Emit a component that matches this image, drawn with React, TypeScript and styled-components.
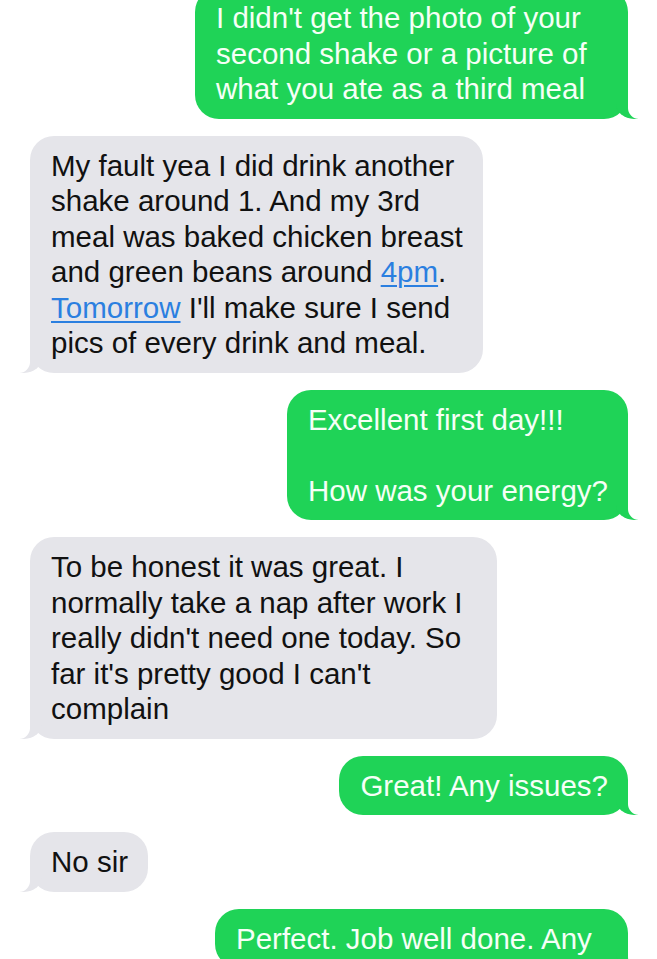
import styled, { createGlobalStyle, css } from "styled-components";

const GlobalStyle = createGlobalStyle`
  html, body {
    margin: 0;
    padding: 0;
    background: #ffffff;
  }
  body {
    width: 657px;
    height: 959px;
    overflow: hidden;
    font-family: "Liberation Sans", Arial, sans-serif;
  }
`;

const GREEN = "#1fd357";
const GRAY = "#e5e5ea";

const Thread = styled.div`
  display: flex;
  flex-direction: column;
  gap: 17px;
  padding: 0 29px 0 30px;
`;

const Bubble = styled.div<{ $mine?: boolean; $minWidth?: number; $first?: boolean }>`
  position: relative;
  box-sizing: border-box;
  padding: 12px 20px 12px 21px;
  border-radius: 24px;
  font-size: 29.5px;
  line-height: 35.5px;
  white-space: nowrap;
  ${(p) => p.$first && "margin-top: -12px;"}
  ${(p) => p.$minWidth && `min-width: ${p.$minWidth}px;`}

  &::before,
  &::after {
    content: "";
    position: absolute;
    bottom: 0;
    height: 25px;
  }

  ${(p) =>
    p.$mine
      ? css`
          align-self: flex-end;
          background: ${GREEN};
          color: #f5fff6;

          &::before {
            right: -10px;
            width: 22px;
            background: ${GREEN};
            border-bottom-left-radius: 18px 15px;
          }
          &::after {
            right: -28px;
            width: 28px;
            background: #ffffff;
            border-bottom-left-radius: 11px;
          }
        `
      : css`
          align-self: flex-start;
          background: ${GRAY};
          color: #111111;

          &::before {
            left: -10px;
            width: 22px;
            background: ${GRAY};
            border-bottom-right-radius: 18px 15px;
          }
          &::after {
            left: -28px;
            width: 28px;
            background: #ffffff;
            border-bottom-right-radius: 11px;
          }
        `}
`;

const Link = styled.span`
  color: #2b7fe0;
  text-decoration: underline;
  text-decoration-thickness: 1.5px;
  text-underline-offset: 3px;
`;

export default function App() {
  return (
    <>
      <GlobalStyle />
      <Thread>
        <Bubble $mine $first $minWidth={433}>
          I didn't get the photo of your
          <br />
          second shake or a picture of
          <br />
          what you ate as a third meal
        </Bubble>

        <Bubble>
          My fault yea I did drink another
          <br />
          shake around 1. And my 3rd
          <br />
          meal was baked chicken breast
          <br />
          and green beans around <Link>4pm</Link>.
          <br />
          <Link>Tomorrow</Link> I'll make sure I send
          <br />
          pics of every drink and meal.
        </Bubble>

        <Bubble $mine>
          Excellent first day!!!
          <br />
          <br />
          How was your energy?
        </Bubble>

        <Bubble $minWidth={467}>
          To be honest it was great. I
          <br />
          normally take a nap after work I
          <br />
          really didn't need one today. So
          <br />
          far it's pretty good I can't
          <br />
          complain
        </Bubble>

        <Bubble $mine>Great! Any issues?</Bubble>

        <Bubble>No sir</Bubble>

        <Bubble $mine $minWidth={413}>
          Perfect. Job well done. Any
        </Bubble>
      </Thread>
    </>
  );
}
